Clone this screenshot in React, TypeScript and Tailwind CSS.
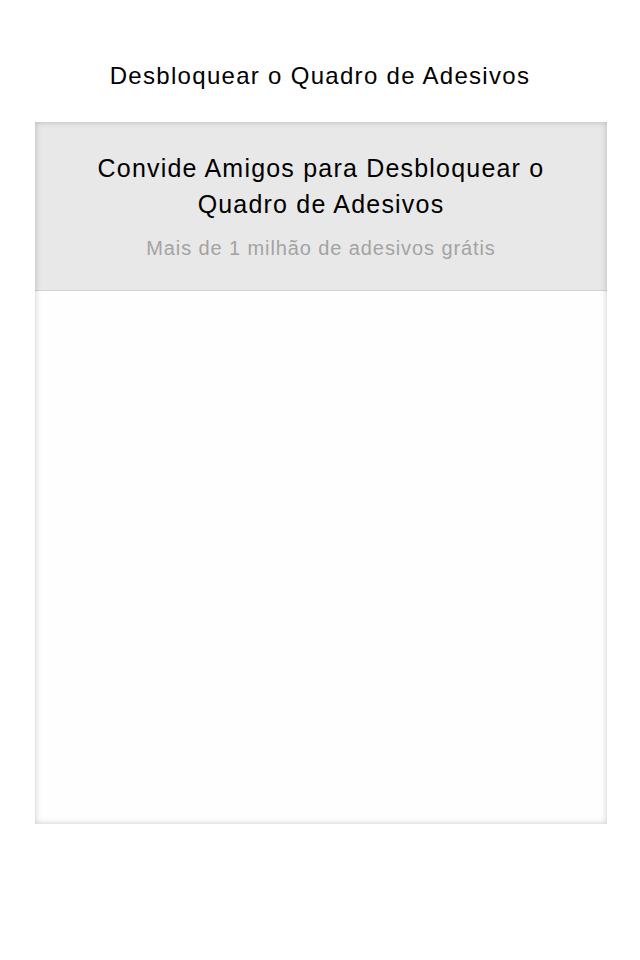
export default function App() {
  return (
    <div
      className="w-[640px] h-[960px] bg-white flex flex-col items-center"
      style={{ fontFamily: '"Liberation Sans", Arial, sans-serif' }}
    >
      <h1 className="mt-[60px] h-[32px] text-[24px] leading-[32px] tracking-[1.3px] text-black">
        Desbloquear o Quadro de Adesivos
      </h1>

      {/* Sticker board panel */}
      <div className="relative mt-[30px] ml-[2px] w-[572px] h-[702px] bg-[#fefefe] flex flex-col">
        <div className="h-[169px] bg-[#e8e8e8] border-b border-[#c9d3dc] flex flex-col items-center pt-[28px]">
          <p className="text-[25px] leading-[36px] tracking-[1.2px] text-black text-center w-[480px]">
            Convide Amigos para Desbloquear o Quadro de Adesivos
          </p>
          <p className="mt-[12px] text-[20px] leading-[28px] tracking-[0.9px] text-[#a3a3a3]">
            Mais de 1 milhão de adesivos grátis
          </p>
        </div>
        <div className="flex-1" />
        <div className="pointer-events-none absolute inset-0 shadow-[inset_0_0_6px_rgba(0,0,0,0.22)]" />
      </div>
    </div>
  );
}
